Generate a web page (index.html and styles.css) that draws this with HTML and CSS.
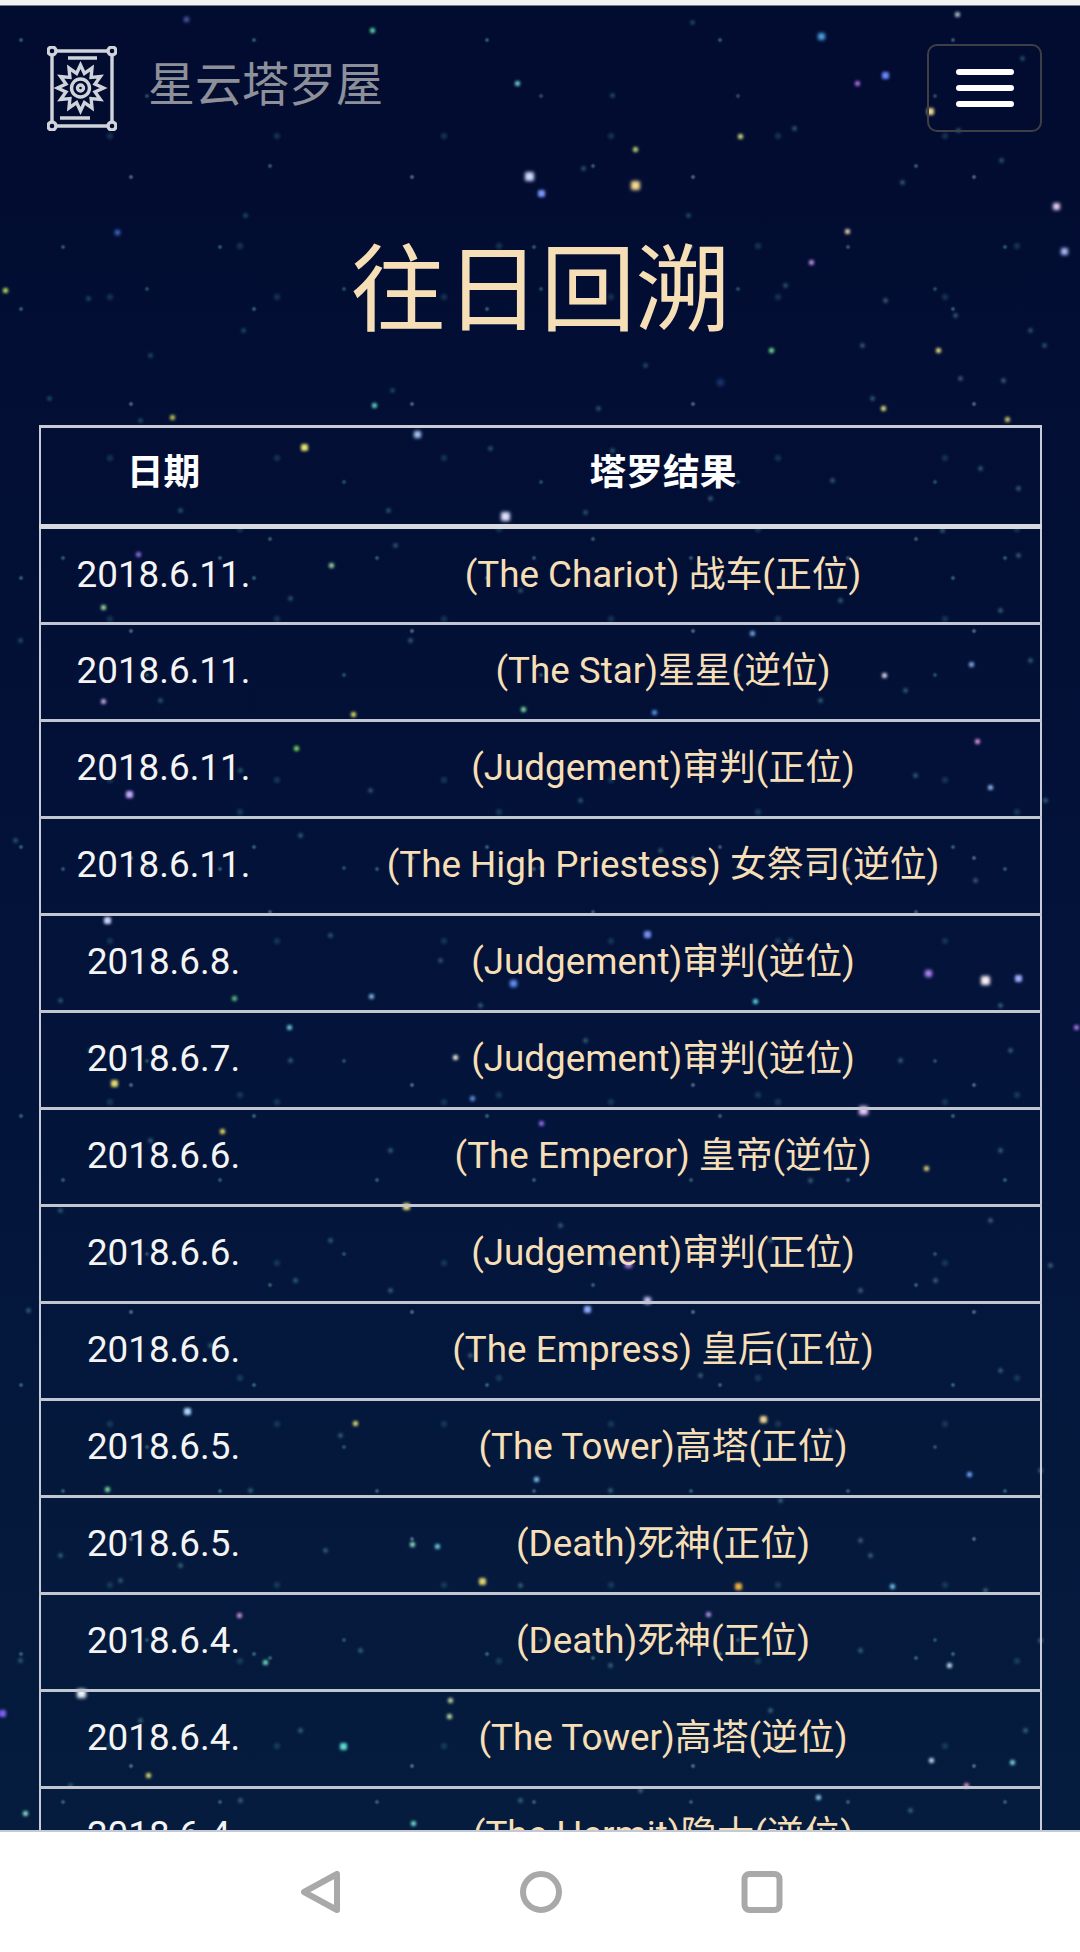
FILE: index.html
```html
<!DOCTYPE html>
<html lang="zh-CN">
<head>
<meta charset="utf-8">
<title>往日回溯 - 星云塔罗屋</title>
<link rel="stylesheet" href="styles.css">
</head>
<body>
<div class="app">
  <div class="statusline"></div>
  <main class="sky">
    <div class="stars"></div>
    <div class="page">
      <header class="topbar">
        <a class="brand" href="#">
          <svg class="brand-icon" viewBox="0 0 70 85" aria-hidden="true">
            <path class="ic" d="M9 5H61M9 80H61M5 9V76M65 9V76"/>
            <circle class="ic" cx="5" cy="5" r="4"/><circle class="ic" cx="65" cy="5" r="4"/>
            <circle class="ic" cx="5" cy="80" r="4"/><circle class="ic" cx="65" cy="80" r="4"/>
            <path class="ic" d="M21 12H50M13 72H43"/>
            <polygon class="ic" points="33.5,19 37.4,27.5 45,22.1 44.1,31.4 53.4,30.5 48,38.1 56.5,42 48,45.9 53.4,53.5 44.1,52.6 45,61.9 37.4,56.5 33.5,65 29.6,56.5 22,61.9 22.9,52.6 13.6,53.5 19,45.9 10.5,42 19,38.1 13.6,30.5 22.9,31.4 22,22.1 29.6,27.5"/>
            <circle class="ic" cx="33.5" cy="42" r="9"/><circle class="ic" cx="33.5" cy="42" r="3"/>
          </svg>
          <span class="brand-name">星云塔罗屋</span>
        </a>
        <button class="burger" type="button" aria-label="菜单"><span></span><span></span><span></span></button>
      </header>
      <h1 class="title">往日回溯</h1>
      <table class="records">
        <thead>
          <tr><th class="c-date">日期</th><th>塔罗结果</th></tr>
        </thead>
        <tbody>
          <tr><td class="c-date">2018.6.11.</td><td>(The Chariot) 战车(正位)</td></tr>
          <tr><td class="c-date">2018.6.11.</td><td>(The Star)星星(逆位)</td></tr>
          <tr><td class="c-date">2018.6.11.</td><td>(Judgement)审判(正位)</td></tr>
          <tr><td class="c-date">2018.6.11.</td><td>(The High Priestess) 女祭司(逆位)</td></tr>
          <tr><td class="c-date">2018.6.8.</td><td>(Judgement)审判(逆位)</td></tr>
          <tr><td class="c-date">2018.6.7.</td><td>(Judgement)审判(逆位)</td></tr>
          <tr><td class="c-date">2018.6.6.</td><td>(The Emperor) 皇帝(逆位)</td></tr>
          <tr><td class="c-date">2018.6.6.</td><td>(Judgement)审判(正位)</td></tr>
          <tr><td class="c-date">2018.6.6.</td><td>(The Empress) 皇后(正位)</td></tr>
          <tr><td class="c-date">2018.6.5.</td><td>(The Tower)高塔(正位)</td></tr>
          <tr><td class="c-date">2018.6.5.</td><td>(Death)死神(正位)</td></tr>
          <tr><td class="c-date">2018.6.4.</td><td>(Death)死神(正位)</td></tr>
          <tr><td class="c-date">2018.6.4.</td><td>(The Tower)高塔(逆位)</td></tr>
          <tr><td class="c-date">2018.6.4.</td><td>(The Hermit)隐士(逆位)</td></tr>
        </tbody>
      </table>
    </div>
  </main>
  <nav class="sysnav">
    <svg class="nav-icon" viewBox="0 0 42 44" aria-hidden="true"><path d="M38 4V40L5 22Z"/></svg>
    <svg class="nav-icon" viewBox="0 0 42 44" aria-hidden="true"><circle cx="21" cy="22" r="18"/></svg>
    <svg class="nav-icon" viewBox="0 0 42 44" aria-hidden="true"><rect x="3.5" y="4" width="35" height="36" rx="5"/></svg>
  </nav>
</div>
</body>
</html>
```
FILE: styles.css
```css
* { box-sizing: border-box; }
html, body { margin: 0; padding: 0; }
body {
  width: 1080px;
  height: 1952px;
  overflow: hidden;
  background: #fff;
  font-family: Roboto, "Noto Sans CJK SC", sans-serif;
}
.app {
  display: flex;
  flex-direction: column;
  height: 1952px;
}
.statusline {
  height: 6px;
  flex: none;
  background: #f2f2f2;
  border-bottom: 1px solid #777c88;
}
.sky {
  position: relative;
  flex: 1;
  min-height: 0;
  overflow: hidden;
  border-bottom: 2px solid #c4c9d6;
  background-color: #020c30;
  background-image:
    radial-gradient(circle 3px at 21px 34px, rgba(110,200,200,.5), transparent),
    radial-gradient(circle 3px at 147px 90px, rgba(110,200,190,.4), transparent),
    radial-gradient(circle 3px at 131px 171px, rgba(170,215,225,.5), transparent),
    radial-gradient(circle 3px at 63px 241px, rgba(120,200,220,.45), transparent),
    radial-gradient(circle 3px at 270px 160px, rgba(130,215,190,.45), transparent),
    radial-gradient(circle 5px at 240px 240px, rgba(60,140,150,.35), transparent),
    radial-gradient(circle 5px at 110px 130px, rgba(60,130,150,.35), transparent),
    linear-gradient(180deg, #020b30 0%, #03133a 55%, #051c3e 100%);
  background-size: 233px 269px, 197px 193px, 281px 227px, 157px 311px, 323px 373px, 259px 283px, 167px 161px, 100% 100%;
}
.stars {
  position: absolute;
  left: 0;
  top: -6px;
  width: 1px;
  height: 1px;
  border-radius: 50%;
  filter: blur(0.8px);
  box-shadow:
    372px 30px 2px 2px #58e0a8, 186px 19px 3px 2px #5a70b0, 821px 36px 3px 3px #50a8e8, 957px 14px 2px 2px #b0c0c8,
    517px 83px 2px 2px #70d0e0, 885px 75px 2px 3px #6a88ff, 857px 83px 2px 2px #b070e0, 930px 111px 2px 3px #f0d890,
    529px 176px 3px 4px #d0dcff, 541px 193px 2px 3px #8098ff, 635px 185px 3px 4px #f8dc90, 635px 149px 2px 2px #c0d870,
    1056px 206px 3px 3px #f0d8f8, 1064px 251px 3px 3px #b0c0ff, 847px 231px 2px 2px #e8d8b0, 811px 262px 2px 2px #c090e0,
    117px 232px 3px 2px #5080e0, 5px 290px 2px 2px #c0e060, 771px 350px 2px 2px #70e090, 938px 350px 2px 2px #f0e080,
    720px 382px 4px 2px #3860b0, 883px 408px 2px 2px #e0e080, 374px 405px 2px 2px #60d8c0, 172px 417px 2px 2px #c0c850,
    740px 136px 2px 2px #d0e080, 417px 434px 3px 3px #b0d0ff, 304px 447px 2px 3px #e8e870, 505px 516px 3px 4px #e0e4ff,
    138px 554px 2px 2px #9070e0, 331px 565px 2px 2px #a0d8a0, 103px 607px 2px 2px #a0e0a0, 1007px 419px 2px 2px #d0c870,
    103px 701px 2px 2px #c0a8e0, 353px 714px 2px 2px #e0e060, 523px 709px 2px 2px #80e0a0, 654px 712px 2px 2px #5898e0,
    752px 633px 2px 2px #70a8d8, 971px 664px 2px 2px #80b0e0, 884px 675px 2px 2px #e0d8f0, 296px 748px 2px 2px #80e060,
    129px 794px 2px 3px #c8a8ff, 977px 741px 2px 2px #e090e0, 990px 787px 2px 2px #90b8f0, 107px 920px 2px 3px #d0d8ff,
    647px 934px 2px 3px #7890f0, 928px 973px 3px 3px #b888ff, 985px 980px 3px 4px #fff4fa, 1018px 978px 2px 3px #a0b0ff,
    513px 983px 3px 3px #6898ff, 371px 996px 2px 2px #80b8e0, 234px 998px 2px 2px #60c080, 755px 1001px 2px 2px #60d0e0,
    455px 1057px 2px 2px #f0f0e0, 114px 1083px 2px 3px #e8e070, 863px 1110px 3px 4px #ecc8ff, 472px 1098px 2px 2px #6090e0,
    541px 1123px 2px 2px #9070f0, 222px 1131px 2px 2px #f0e060, 406px 1206px 2px 3px #f0e070, 1076px 1027px 2px 2px #b070f0,
    289px 1027px 2px 2px #70c8e0, 926px 1168px 2px 2px #e0d080, 628px 1264px 3px 3px #b080f8, 647px 1300px 3px 3px #d0d0ff,
    587px 1309px 2px 3px #90b0ff, 187px 1411px 2px 3px #b0d8ff, 355px 1423px 2px 2px #e0e070, 763px 1419px 2px 3px #f0d890,
    536px 1479px 2px 2px #80c8f0, 969px 1474px 2px 2px #70a8ff, 107px 1489px 2px 2px #80e0a0, 437px 1546px 2px 2px #70d0e0,
    412px 1544px 2px 2px #90e0c0, 482px 1581px 2px 3px #e0d870, 738px 1586px 2px 3px #f0b040, 892px 1586px 2px 2px #70c0f0,
    239px 1615px 2px 2px #d090e0, 708px 1614px 2px 2px #b090e0, 265px 1662px 2px 2px #70e0c0, 949px 1665px 2px 2px #c0e0f0,
    81px 1693px 3px 4px #f0f8ff, 2px 1713px 2px 3px #8060f0, 450px 1700px 2px 2px #c0d8a0, 449px 1716px 2px 2px #c0e0a0,
    343px 1746px 2px 3px #60e0d0, 148px 1775px 2px 2px #e0e070, 931px 1760px 2px 2px #c0e0f0, 1012px 1762px 2px 2px #80d0e0,
    966px 1785px 2px 2px #e090c0, 413px 1823px 2px 2px #70e0d0, 25px 1813px 2px 2px #90e0d0, 818px 1797px 2px 2px #90c8f0;
}
.stars::after {
  content: "";
  position: absolute;
  left: 0;
  top: 0;
  width: 1px;
  height: 1px;
  border-radius: 50%;
  box-shadow:
    692px 22px 3px 1px #4aa, 1022px 58px 3px 1px #5bb, 958px 130px 3px 1px #6cc, 612px 95px 3px 1px #5aa, 583px 168px 3px 1px #6bb,
    794px 128px 3px 1px #7cc, 902px 182px 3px 1px #8cc, 1001px 160px 3px 1px #6bb, 688px 215px 3px 1px #5aa, 245px 215px 3px 1px #4aa,
    88px 298px 3px 1px #4aa, 150px 355px 3px 1px #4a9, 243px 330px 3px 1px #4aa, 392px 390px 3px 1px #4aa, 785px 285px 3px 1px #6bb,
    885px 300px 3px 1px #9cc, 955px 315px 3px 1px #7cc, 1030px 330px 3px 1px #6bb, 862px 345px 3px 1px #8cc, 1003px 380px 3px 1px #9cc,
    1044px 345px 3px 1px #6bb, 960px 378px 3px 1px #9cc, 872px 398px 3px 1px #7cc, 645px 365px 3px 1px #5aa, 598px 408px 3px 1px #6bb,
    49px 398px 3px 1px #4a9, 140px 420px 3px 1px #4aa, 490px 448px 3px 1px #6bb, 612px 450px 3px 1px #6bb, 718px 462px 3px 1px #6bb,
    832px 480px 3px 1px #7cc, 980px 468px 3px 1px #7cc, 1018px 488px 3px 1px #8cc, 180px 510px 3px 1px #5bb, 388px 510px 3px 1px #6bb,
    585px 512px 3px 1px #6bb, 710px 498px 3px 1px #8cc, 942px 530px 3px 1px #7cc, 1018px 555px 3px 1px #8cc, 395px 545px 3px 1px #7bb,
    290px 598px 3px 1px #6bb, 520px 590px 3px 1px #6bb, 840px 600px 3px 1px #7cc, 1000px 610px 3px 1px #8cc, 20px 640px 3px 1px #5aa,
    410px 640px 3px 1px #7cc, 1030px 660px 3px 1px #7cc, 160px 700px 3px 1px #6bb, 820px 700px 3px 1px #7cc, 905px 690px 3px 1px #7cc,
    240px 770px 3px 1px #6bb, 370px 790px 3px 1px #7bb, 580px 800px 3px 1px #6bb, 915px 775px 3px 1px #7cc, 1045px 800px 3px 1px #7cc,
    15px 840px 3px 1px #6bb, 300px 835px 3px 1px #7cc, 660px 850px 3px 1px #6bb, 820px 870px 3px 1px #7cc, 975px 880px 3px 1px #8cc,
    330px 935px 3px 1px #7bb, 440px 960px 3px 1px #7bb, 790px 940px 3px 1px #7cc, 1000px 1005px 3px 1px #8cc, 480px 1005px 3px 1px #7cc,
    60px 1000px 3px 1px #6bb, 90px 1050px 3px 1px #7bb, 290px 1060px 3px 1px #7cc, 585px 1040px 3px 1px #7cc, 900px 1060px 3px 1px #8cc,
    1010px 1050px 3px 1px #8cc, 150px 1140px 3px 1px #7cc, 390px 1150px 3px 1px #7cc, 660px 1160px 3px 1px #7cc, 810px 1180px 3px 1px #8cc,
    1000px 1150px 3px 1px #8cc, 60px 1210px 3px 1px #6bb, 330px 1240px 3px 1px #7cc, 560px 1225px 3px 1px #7cc, 770px 1240px 3px 1px #8cc,
    990px 1220px 3px 1px #9cc, 295px 1280px 3px 1px #7cc, 390px 1290px 3px 1px #8cc, 860px 1290px 3px 1px #9cc, 935px 1280px 3px 1px #9cc,
    1050px 1265px 3px 1px #8cc, 28px 1310px 3px 1px #7cc, 210px 1345px 3px 1px #7cc, 470px 1355px 3px 1px #8cc, 700px 1375px 3px 1px #8cc,
    1000px 1370px 3px 1px #8cc, 340px 1435px 3px 1px #7cc, 830px 1430px 3px 1px #8cc, 1040px 1470px 3px 1px #8cc, 250px 1490px 3px 1px #7cc,
    610px 1490px 3px 1px #8cc, 780px 1500px 3px 1px #8cc, 60px 1555px 3px 1px #7cc, 120px 1580px 3px 1px #7bb, 180px 1565px 3px 1px #8cc,
    860px 1540px 3px 1px #9cc, 870px 1555px 3px 1px #9cc, 325px 1550px 3px 1px #7cc, 520px 1585px 3px 1px #8cc, 985px 1590px 3px 1px #8cc,
    20px 1660px 3px 1px #6bb, 360px 1650px 3px 1px #8cc, 610px 1665px 3px 1px #8cc, 860px 1650px 3px 1px #8cc, 1040px 1640px 3px 1px #8cc,
    140px 1720px 3px 1px #7cc, 300px 1730px 3px 1px #8cc, 600px 1740px 3px 1px #8cc, 770px 1710px 3px 1px #8cc, 1025px 1730px 3px 1px #8cc,
    70px 1785px 3px 1px #6bb, 240px 1800px 3px 1px #8cc, 520px 1800px 3px 1px #8cc, 640px 1790px 3px 1px #8cc, 910px 1810px 3px 1px #8cc;
}
.page {
  position: relative;
  padding: 0 38px 0 39px;
}
.topbar {
  display: flex;
  align-items: center;
  justify-content: space-between;
  padding: 38px 0 0 8px;
}
.brand {
  display: flex;
  align-items: center;
  gap: 31px;
  text-decoration: none;
}
.brand-icon {
  display: block;
  width: 70px;
  height: 85px;
}
.ic {
  fill: none;
  stroke: #d0d3da;
  stroke-width: 3.4;
}
.brand-name {
  font-size: 47px;
  line-height: 60px;
  color: #8e9099;
  position: relative;
  top: -3px;
}
.burger {
  display: flex;
  flex-direction: column;
  justify-content: center;
  align-items: center;
  gap: 10px;
  width: 115px;
  height: 88px;
  padding: 0;
  background: none;
  border: 2px solid #3e3f44;
  border-radius: 10px;
}
.burger span {
  display: block;
  width: 58px;
  height: 6px;
  border-radius: 3px;
  background: #fff;
}
.title {
  margin: 100px 0 0;
  text-align: center;
  font-size: 95px;
  line-height: 120px;
  font-weight: 400;
  color: #f6dfb6;
}
.records {
  width: 1003px;
  margin-top: 73px;
  border-collapse: collapse;
  table-layout: fixed;
  font-size: 36.8px;
  line-height: 54px;
  border-left: 2px solid #c8ccd6;
  border-right: 2px solid #c8ccd6;
  border-top: 3px solid #c8ccd6;
}
.records th, .records td {
  height: 97px;
  padding: 0 0 2px;
  text-align: center;
  vertical-align: middle;
  border-top: 3px solid #c2c6d1;
  border-bottom: 3px solid #c2c6d1;
}
.records th {
  color: #fff;
  font-weight: 700;
  height: 100px;
  padding-bottom: 6px;
  border-top: 0;
  border-bottom: 5px solid #d6d9df;
}
.records td { color: #f6dfb6; }
.records td.c-date { color: #f4f4f4; }
.records .c-date { width: 246px; }
.sysnav {
  flex: none;
  height: 120px;
  display: flex;
  align-items: flex-start;
  justify-content: center;
  gap: 179px;
  padding: 38px 0 0 2px;
  background: #fff;
}
.nav-icon {
  display: block;
  width: 42px;
  height: 44px;
}
.nav-icon path, .nav-icon circle, .nav-icon rect {
  fill: none;
  stroke: #a9a9a9;
  stroke-width: 6;
  stroke-linejoin: round;
}
```
